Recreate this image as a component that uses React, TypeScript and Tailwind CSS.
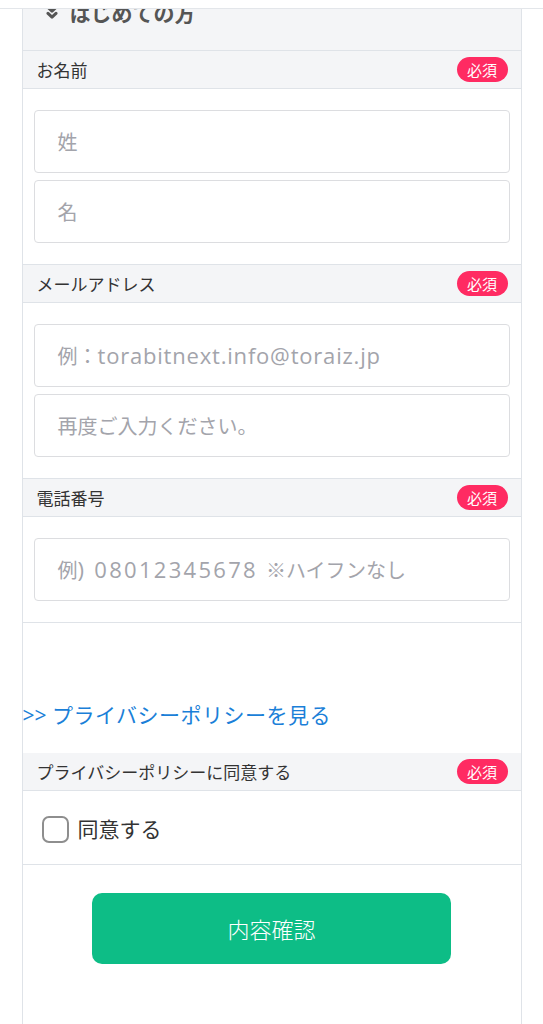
const FONT = '[font-family:"Noto_Sans_CJK_JP","Noto_Sans",sans-serif]'
const LATIN = '[font-family:"Open_Sans","Noto_Sans_CJK_JP",sans-serif]'

function Badge() {
  return (
    <span className="flex h-[25px] w-[51px] items-center justify-center rounded-full bg-[#ff2b62] text-[15px] leading-none text-white">
      必須
    </span>
  )
}

function RowHeader({ label }: { label: string }) {
  return (
    <div className="flex h-[38px] items-center justify-between border-b border-[#dfe3e8] bg-[#f4f5f7] pl-[14px] pr-[13px]">
      <span className="text-[17px] text-[#333]">{label}</span>
      <Badge />
    </div>
  )
}

function Field({ children }: { children: React.ReactNode }) {
  return (
    <div className="flex h-[63px] items-center rounded-[4px] border border-[#dcdde0] bg-white pl-[23px]">
      <span className="flex items-baseline whitespace-pre text-[20px] text-[#a3a4ab]">{children}</span>
    </div>
  )
}

export default function App() {
  return (
    <div className={`min-h-[1024px] bg-white ${FONT}`}>
      <div className="relative z-10 h-[9px] border-b border-[#e3e6ea] bg-white" />

      <div className="mx-auto min-h-[1015px] w-[500px] border-x border-[#dfe3e8] bg-white">
        {/* heading, scrolled partly under the top bar */}
        <div className="h-[42px] overflow-hidden border-b border-[#dfe3e8] bg-[#f4f5f7]">
          <div className="-mt-[10px] flex items-center gap-[12px] pl-[23px]">
            <svg width="12" height="15" viewBox="0 0 12 15" fill="none" stroke="#555" strokeWidth="3" strokeLinecap="round" strokeLinejoin="round">
              <path d="M2 2.4 6 6.2 10 2.4" />
              <path d="M2 8.4 6 12.2 10 8.4" />
            </svg>
            <span className="text-[21px] font-bold leading-[26px] text-[#555]">はじめての方</span>
          </div>
        </div>

        <RowHeader label="お名前" />
        <div className="flex flex-col gap-[7px] border-b border-[#dfe3e8] px-[11px] py-[21px]">
          <Field>姓</Field>
          <Field>名</Field>
        </div>

        <RowHeader label="メールアドレス" />
        <div className="flex flex-col gap-[7px] border-b border-[#dfe3e8] px-[11px] py-[21px]">
          <Field>
            <span>例：</span>
            <span className={`${LATIN} text-[22px] tracking-[0.8px]`}>torabitnext.info@toraiz.jp</span>
          </Field>
          <Field>再度ご入力ください。</Field>
        </div>

        <RowHeader label="電話番号" />
        <div className="border-b border-[#dfe3e8] px-[11px] py-[21px]">
          <Field>
            <span>例</span>
            <span className={`${LATIN} text-[22px] tracking-[2.3px]`}>) 08012345678 </span>
            <span>※ハイフンなし</span>
          </Field>
        </div>

        <div className="pb-[24px] pt-[77px]">
          <a href="#" className="flex items-baseline whitespace-pre text-[21px] leading-[28px] text-[#1b7fd8]">
            <span className={LATIN}>&gt;&gt; </span>
            <span className="tracking-[0.5px]">プライバシーポリシーを見る</span>
          </a>
        </div>

        <RowHeader label="プライバシーポリシーに同意する" />
        <label className="flex h-[74px] items-center gap-[9px] border-b border-[#dfe3e8] pl-[19px] pt-[3px]">
          <span className="h-[27px] w-[27px] rounded-[7px] border-2 border-[#8e8e8e] bg-white" />
          <span className="text-[21px] text-[#333]">同意する</span>
        </label>

        <div className="flex justify-center pt-[28px]">
          <button className="flex h-[71px] w-[359px] items-center justify-center rounded-[10px] bg-[#0dbd86] text-[22px] font-light text-white">
            内容確認
          </button>
        </div>
      </div>
    </div>
  )
}
